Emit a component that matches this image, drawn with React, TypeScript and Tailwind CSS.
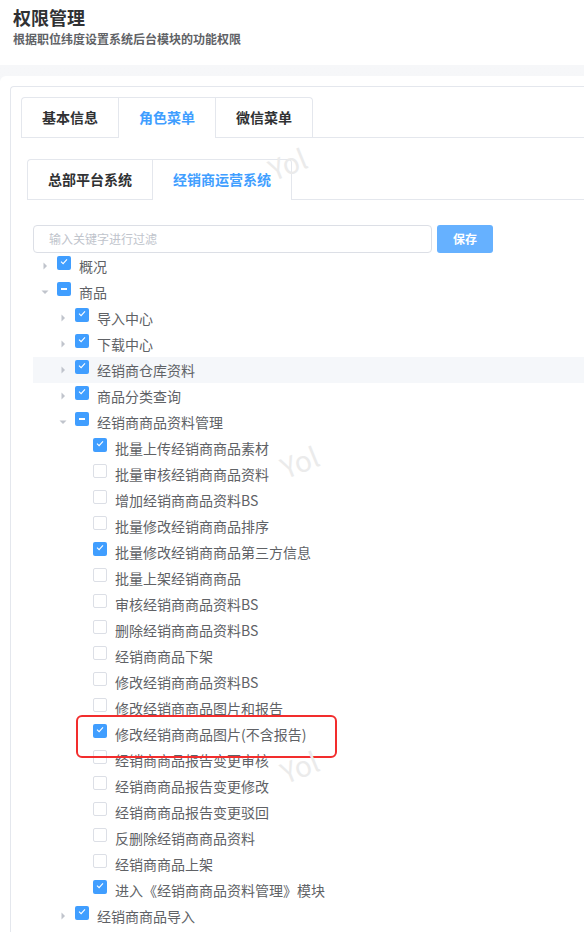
import React from "react"

type Check = "on" | "off" | "half"

type Row = {
  level: number
  label: string
  check: Check
  caret?: "right" | "down"
  active?: boolean
}

const rows: Row[] = [
  { level: 1, label: "概况", check: "on", caret: "right" },
  { level: 1, label: "商品", check: "half", caret: "down" },
  { level: 2, label: "导入中心", check: "on", caret: "right" },
  { level: 2, label: "下载中心", check: "on", caret: "right" },
  { level: 2, label: "经销商仓库资料", check: "on", caret: "right", active: true },
  { level: 2, label: "商品分类查询", check: "on", caret: "right" },
  { level: 2, label: "经销商商品资料管理", check: "half", caret: "down" },
  { level: 3, label: "批量上传经销商商品素材", check: "on" },
  { level: 3, label: "批量审核经销商商品资料", check: "off" },
  { level: 3, label: "增加经销商商品资料BS", check: "off" },
  { level: 3, label: "批量修改经销商商品排序", check: "off" },
  { level: 3, label: "批量修改经销商商品第三方信息", check: "on" },
  { level: 3, label: "批量上架经销商商品", check: "off" },
  { level: 3, label: "审核经销商商品资料BS", check: "off" },
  { level: 3, label: "删除经销商商品资料BS", check: "off" },
  { level: 3, label: "经销商商品下架", check: "off" },
  { level: 3, label: "修改经销商商品资料BS", check: "off" },
  { level: 3, label: "修改经销商商品图片和报告", check: "off" },
  { level: 3, label: "修改经销商商品图片(不含报告)", check: "on" },
  { level: 3, label: "经销商商品报告变更审核", check: "off" },
  { level: 3, label: "经销商商品报告变更修改", check: "off" },
  { level: 3, label: "经销商商品报告变更驳回", check: "off" },
  { level: 3, label: "反删除经销商商品资料", check: "off" },
  { level: 3, label: "经销商商品上架", check: "off" },
  { level: 3, label: "进入《经销商商品资料管理》模块", check: "on" },
  { level: 2, label: "经销商商品导入", check: "on", caret: "right" },
]

function Box({ state }: { state: Check }) {
  if (state === "off") {
    return <span className="mb-[6px] h-[14px] w-[14px] shrink-0 rounded-[2px] border border-[#dcdfe6] bg-white" />
  }
  return (
    <span className="mb-[6px] flex h-[14px] w-[14px] shrink-0 items-center justify-center rounded-[2px] bg-[#409eff]">
      {state === "on" ? (
        <svg width="14" height="14" viewBox="0 0 14 14">
          <polyline points="4,5.6 6.1,7.6 10,3.4" fill="none" stroke="#fff" strokeWidth="1.1" />
        </svg>
      ) : (
        <span className="h-[1.5px] w-[6px] bg-white" />
      )}
    </span>
  )
}

function Caret({ dir }: { dir?: "right" | "down" }) {
  return (
    <span className="flex h-[26px] w-[24px] shrink-0 items-center justify-center">
      {dir === "right" && (
        <svg width="12" height="12" viewBox="0 0 12 12">
          <polygon points="4.5,2.5 8,6 4.5,9.5" fill="#c0c4cc" />
        </svg>
      )}
      {dir === "down" && (
        <svg width="12" height="12" viewBox="0 0 12 12">
          <polygon points="2.5,4.5 9.5,4.5 6,8" fill="#c0c4cc" />
        </svg>
      )}
    </span>
  )
}

function Watermark({ className }: { className: string }) {
  return (
    <span className={"pointer-events-none absolute -rotate-[22deg] text-[28px] font-normal text-[#ebebeb] " + className}>
      Yol
    </span>
  )
}

export default function App() {
  return (
    <div className="relative h-[932px] w-[584px] overflow-hidden bg-white font-['Noto_Sans_CJK_SC',sans-serif]">
      {/* page header */}
      <div className="h-[65px] px-[13px] pt-[5px]">
        <h1 className="text-[18px] font-bold leading-[25px] text-[#303133]">权限管理</h1>
        <p className="mt-px text-[12px] font-bold leading-[16px] text-[#606266]">根据职位纬度设置系统后台模块的功能权限</p>
      </div>

      <div className="bg-gradient-to-b from-[#f6f7f9] to-[#eceef2] pt-[11px]">
        <div className="rounded-tl-[6px] bg-white pl-[10px] pt-[10px]">
          <div className="h-[900px] rounded-tl-[4px] border-l border-t border-[#e4e7ed] pl-[10px] pt-[10px]">
            {/* outer tabs */}
            <div className="flex items-start border-b border-[#e4e7ed]">
              <div className="flex h-[40px] w-[97px] items-center justify-center rounded-tl-[4px] border-l border-t border-[#e4e7ed] text-[14px] font-bold text-[#303133]">
                基本信息
              </div>
              <div className="-mb-px flex h-[41px] w-[97px] items-center justify-center border-l border-t border-[#e4e7ed] bg-white pb-px text-[14px] font-bold text-[#409eff]">
                角色菜单
              </div>
              <div className="flex h-[40px] w-[98px] items-center justify-center rounded-tr-[4px] border-x border-t border-[#e4e7ed] text-[14px] font-bold text-[#303133]">
                微信菜单
              </div>
            </div>

            {/* inner tabs */}
            <div className="ml-[6px] mt-[21px] flex items-start border-b border-[#e4e7ed]">
              <div className="flex h-[40px] w-[125px] items-center justify-center rounded-tl-[4px] border-l border-t border-[#e4e7ed] text-[14px] font-bold text-[#303133]">
                总部平台系统
              </div>
              <div className="-mb-px flex h-[41px] w-[140px] items-center justify-center rounded-tr-[4px] border-x border-t border-[#e4e7ed] bg-white pb-px text-[14px] font-bold text-[#409eff]">
                经销商运营系统
              </div>
            </div>

            <div className="ml-[12px] mt-[25px]">
              {/* filter */}
              <div className="flex items-center gap-[5px]">
                <div className="flex h-[28px] w-[399px] items-center rounded-[4px] border border-[#dcdfe6] px-[15px] text-[12px] text-[#c0c4cc]">
                  输入关键字进行过滤
                </div>
                <button className="h-[28px] w-[56px] rounded-[3px] bg-[#66b1ff] text-[12px] font-bold text-white">保存</button>
              </div>

              {/* tree */}
              <div>
                {rows.map((r) => (
                  <div
                    key={r.label}
                    className={"flex h-[26px] items-center " + (r.active ? "bg-[#f5f7fa]" : "")}
                    style={{ paddingLeft: (r.level - 1) * 18 }}
                  >
                    <Caret dir={r.caret} />
                    <Box state={r.check} />
                    <span className="ml-[8px] whitespace-nowrap text-[14px] leading-[26px] text-[#606266]">{r.label}</span>
                  </div>
                ))}
              </div>
            </div>
          </div>
        </div>
      </div>

      {/* annotation */}
      <div className="pointer-events-none absolute left-[76px] top-[715px] h-[43px] w-[261px] rounded-[6px] border-2 border-[#f22d2d]" />

      <Watermark className="left-[268px] top-[142px]" />
      <Watermark className="left-[280px] top-[440px]" />
      <Watermark className="left-[280px] top-[745px]" />
    </div>
  )
}
